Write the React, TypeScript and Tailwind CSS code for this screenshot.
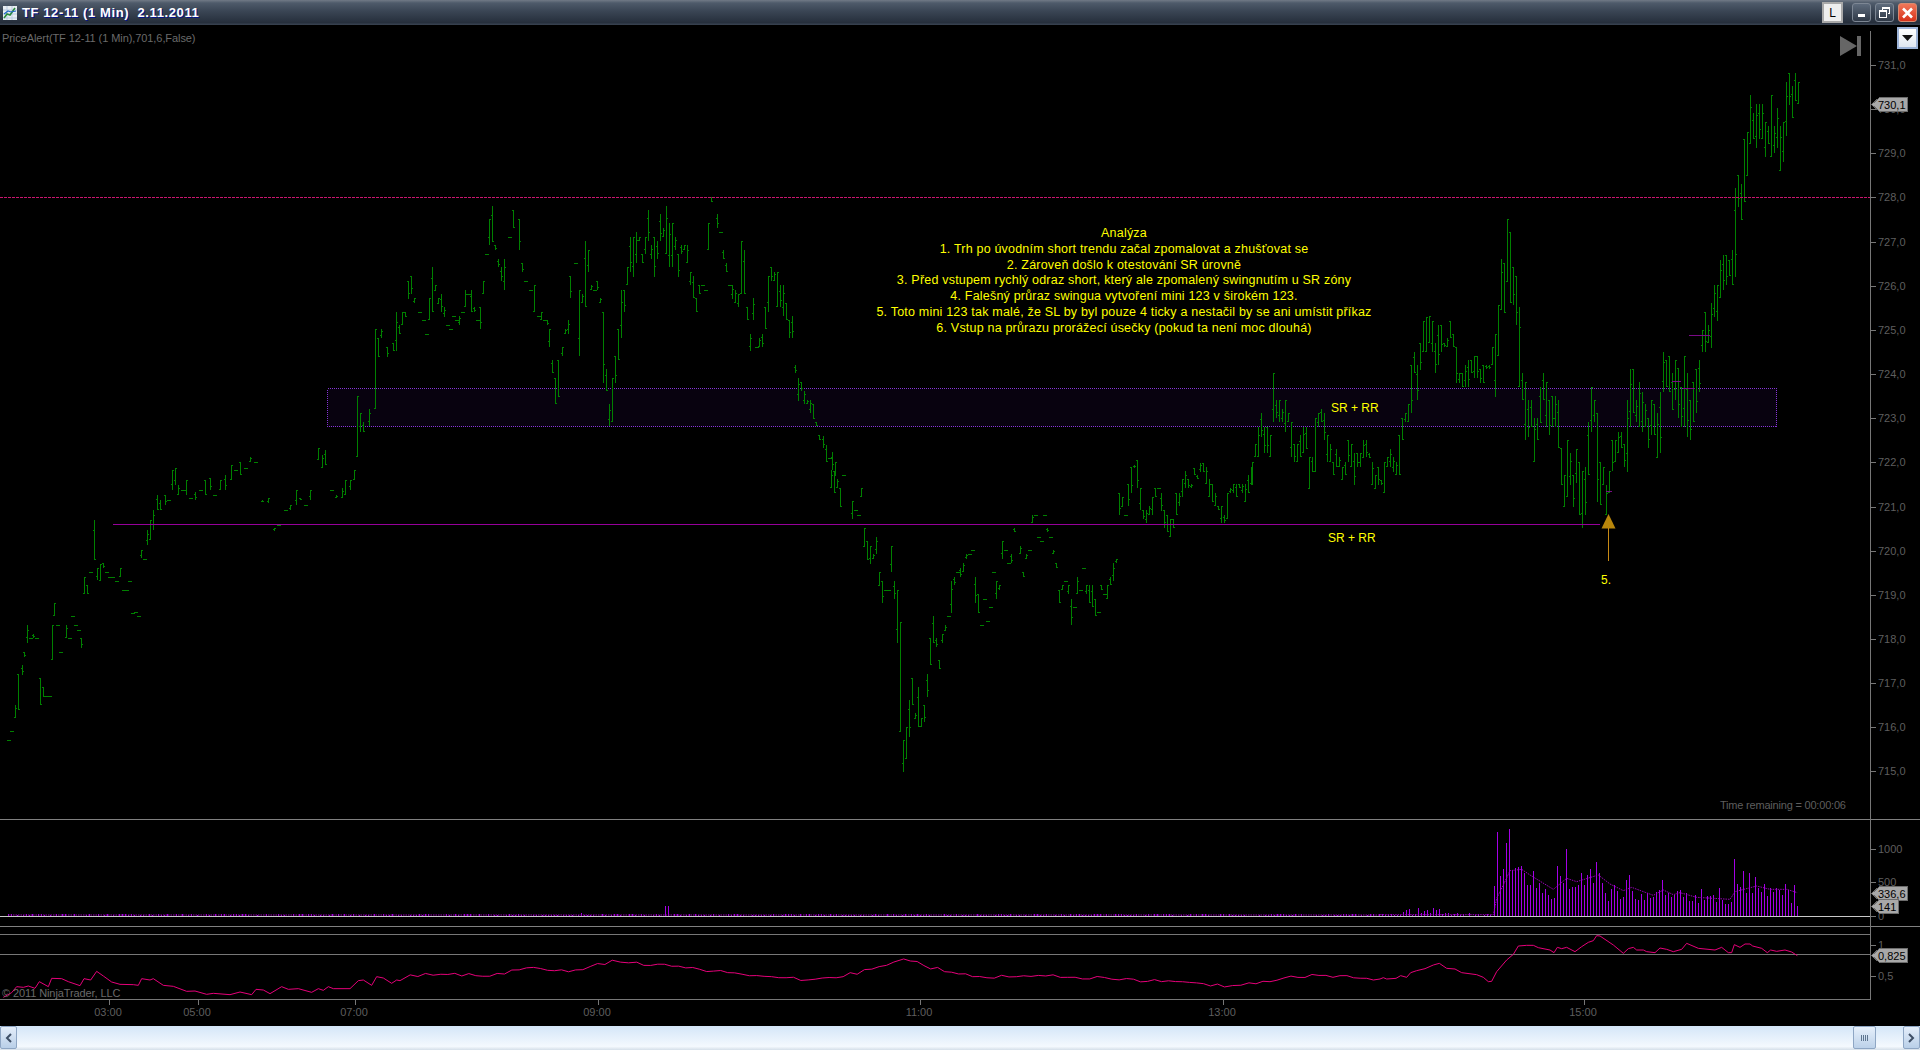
import React from "react";

function rng(seed: number) {
  let s = seed;
  return () => {
    s |= 0;
    s = (s + 0x6d2b79f5) | 0;
    let t = Math.imul(s ^ (s >>> 15), 1 | s);
    t = (t + Math.imul(t ^ (t >>> 7), 61 | t)) ^ t;
    return ((t ^ (t >>> 14)) >>> 0) / 4294967296;
  };
}

const LEFT = [8,740,740,11,731,731,15,705,718,18,674,710,22,665,675,24,652,657,27,625,643,30,638,638,33,634,638,36,638,638,40,678,705,43,687,697,46,696,696,49,696,696,52,625,660,54,603,616,57,625,625,60,652,652,66,625,638,69,638,638,72,616,616,75,625,625,78,630,630,81,638,648,84,577,594,87,585,594,90,572,572,94,520,560,97,568,580,100,564,581,103,563,568,106,572,572,109,577,577,112,577,577,116,581,581,120,568,577,123,590,590,126,590,590,129,581,581,132,613,613,135,612,612,138,616,616,141,550,558,144,559,559,147,530,545,150,520,540,153,510,530,157,495,510,160,500,510,165,495,505,168,500,500,172,470,490,175,468,485,178,485,495,182,490,490,186,480,495,190,498,498,195,492,500,200,490,490,205,480,495,210,478,490,214,495,495,220,480,490,225,475,490,231,465,480,235,470,470,240,462,475,245,468,468,250,457,462,255,462,462,262,500,502,268,498,503,274,528,531,278,525,525,285,510,510,290,505,510,296,490,505,300,498,500,305,505,505,310,490,500,318,448,460,322,455,468,325,450,465,331,490,490,336,495,498,342,488,498,345,480,495,350,480,490,354,470,480,823,436,448,826,445,462,829,458,458,832,452,470,835,462,476];
const Z9 = [172,618,800,181,670,725,190,697,725,208,658,708,226,418,658,235,445,500,244,418,445,262,472,500,280,460,484,289,366,484,298,405,433,307,366,405,316,366,380,325,273,326,334,258,312,343,325,340,357,367,367,370,391,391,379,433,433,388,324,391,397,232,367,406,285,302,415,324,341,423,312,366,433,352,380,442,406,406,451,418,418,460,379,379,469,391,391,478,379,406,487,367,367,496,300,352,505,313,313,514,300,367,523,352,367,532,391,391,541,352,418,550,273,313,559,193,193,568,88,166,577,48,155,586,166,181,595,208,232,604,232,274,613,207,301,627,142,142,640,61,115,658,88,181,667,220,247,676,274,274,690,301,301,703,286,367,713,379,379,722,367,391,731,391,391,740,391,406,748,418,472,757,511,550,766,565,643,775,511,620,785,472,499,794,418,432,803,391,432,811,259,325,825,220,220,838,301,499,847,313,340,856,154,352,865,181,247,874,286,301,883,301,301,892,274,301,901,325,340,910,367,578,919,538,604,928,643,708,937,565,697,946,499,578,955,418,511,964,301,445,973,301,367,982,232,286,991,142,247,1000,142,260,1009,127,220,1018,142,154,1027,193,220,1036,142,193,1045,60,154,1054,166,208,1063,142,260,1072,154,208,1081,72,154,1090,115,142,1099,48,193,1108,100,232,1117,100,232,1126,142,181,1135,193,260,1144,166,193,1153,166,181,1162,166,220,1171,247,286,1180,259,325,1189,325,367,1198,286,313,1207,286,286,1216,301,301,1225,100,181,1234,22,35,1252,72,115,1261,127,127,1270,181,208,1279,220,247,1288,286,286,1297,286,326,1306,301,340,1315,313,352,1324,154,313,1333,181,313,1342,352,391,1351,433,484,1360,325,391,1369,472,472,1378,445,472,1387,433,472,1396,352,418,1405,259,367,1414,232,274,1423,247,274,1432,247,352,1441,286,352,1450,286,379,1459,340,391,1468,391,445,1477,379,445,1486,526,550,1495,565,632,1504,577,604,1513,604,643,1522,631,643,1531,631,670,1540,643,686,1549,697,708,1558,735,750];
const Z10 = [94,0,55,103,3,70,112,28,55,121,55,110,130,15,15,157,93,148,166,121,121,175,136,136,184,55,82,193,175,230,202,214,270,211,228,281,220,253,268,229,202,253,238,307,347,247,334,400,256,361,361,265,361,361,274,229,307,283,334,388,292,361,520,301,455,785,310,810,905,319,771,866,328,690,800,337,625,706,346,730,746,355,652,772,364,745,772,373,706,757,382,613,680,391,505,586,400,439,520,409,505,532,418,571,598,427,493,520,436,466,482,445,439,439,454,334,428,463,322,346,472,307,307,481,295,322,490,280,307,499,253,268,508,253,253,517,241,241,526,322,400,535,373,428,544,466,466,553,388,388,562,454,454,571,412,412,580,307,307,589,334,388,598,346,361,607,214,268,616,241,241,625,280,280,634,253,280,643,175,187,661,229,253,670,307,322,679,253,268,688,241,241,697,136,160,706,136,136,715,202,202,724,214,214,733,136,136,742,175,187,751,202,202,760,241,253,769,280,295,778,361,400,787,346,361,796,334,334,805,346,373,814,388,466,823,412,412,832,322,373,841,361,361,850,295,295,859,346,373,868,346,400,877,346,412,886,388,439,895,427,427,904,346,361,913,373,373,922,346,388,931,322,346,940,280,334,949,268,280,958,70,136,967,82,110,976,136,136,985,43,109,994,-10,70,1003,-15,-5,1012,-30,55,1021,55,120,1030,120,148,1039,120,160,1048,109,136,1057,82,136,1066,55,82,1075,55,55,1084,70,123,1093,121,175,1102,136,187,1111,148,202,1120,148,175,1129,70,136,1138,70,109,1147,28,82,1156,4,55,1165,28,55,1174,43,55,1183,-5,16,1192,16,28,1201,-20,5,1210,-20,5,1219,-10,43,1228,28,82,1237,43,95,1246,70,109,1255,109,121,1264,109,160,1273,136,160,1282,70,148,1291,55,70,1300,43,70,1309,43,82,1318,43,55,1327,43,70,1336,43,95,1345,16,70,1354,-10,43];
const Z11 = [36,757,825,44,703,742,53,650,742,62,610,680,71,650,730,80,650,730,89,676,742,98,490,637,107,570,625,116,570,637,125,597,637,134,570,665,143,610,637,152,637,742,161,703,757,170,703,757,179,676,742,188,650,730,197,650,716,206,742,836,215,742,785,224,625,785,233,610,650,242,597,637,251,610,690,260,676,757,269,703,757,278,757,795,287,716,770,296,742,770,305,770,810,314,757,795,323,690,757,332,703,770,341,730,825,350,730,770,359,730,770,368,690,745,377,690,742,386,730,745,395,757,825,404,795,836,413,770,825,422,810,825,431,757,850,440,742,770,449,716,770,458,742,785,467,757,795,476,676,795,485,625,690,494,610,637,503,583,637,512,465,610,521,425,490,530,465,570,539,400,480,548,332,425,557,320,425,566,318,400,575,332,425,584,400,490,593,345,465,602,345,425,611,400,412,620,385,412,629,332,385,638,372,412,647,412,518,656,490,518,665,490,532,674,465,532,683,450,532,692,450,490,701,438,505,710,438,505,719,478,518,728,465,518,737,465,478,746,465,478,755,412,465,764,372,560,773,285,438,782,148,300,791,160,310,800,28,215,809,65,280,818,172,285,827,198,345,836,290,532,845,490,570,854,515,690,863,570,680,872,570,650,881,625,757,890,625,690,899,530,640,908,490,570,917,515,650,926,570,676,935,558,650,944,558,650,953,570,715,962,715,825,971,795,890,980,690,860,989,730,825,998,795,890,1007,716,820,1016,757,915,1025,782,955,1034,770,915,1043,637,795,1052,532,665,1061,570,637,1070,610,875,1079,757,885,1088,770,825,1097,825,915,1106,782,850,1115,690,782,1124,690,757,1133,665,730,1142,665,715,1151,703,770,1160,570,785,1169,478,650,1178,478,610,1187,570,637,1196,515,650,1205,545,665,1214,583,650,1223,625,715,1232,570,676,1241,583,676,1250,610,745,1259,545,730,1268,425,545,1277,450,532,1286,438,545,1295,490,600,1304,450,570,1313,475,625,1322,530,650,1331,438,650,1340,490,680,1349,570,690,1358,515,637,1367,478,610,1376,450,545,1385,360,425,1394,305,425,1403,345,400,1412,280,415,1421,225,320,1430,225,332,1439,150,265,1448,135,240,1457,135,225,1466,150,198,1475,120,225];
const Z8 = [764,385,651,773,345,440,782,372,480,791,238,425,800,215,347,809,105,253,818,160,238,827,133,265,836,133,238,845,133,238,854,187,292,863,198,253,872,105,292,881,198,280,890,145,265,899,198,332,908,187,305,917,66,228,926,40,135,935,79,173,944,40,122,953,66,133];

function barsPath() {
  const r = rng(12);
  let d = "";
  const add = (x0: number, t0: number, b0: number) => {
    const xi = Math.round(x0);
    const x = xi + 0.5;
    const t = Math.round(t0);
    const b = Math.round(b0);
    if (b - t < 1) {
      d += `M${xi - 1} ${t + 0.5}H${xi + 3}`;
      return;
    }
    d += `M${x} ${t}V${b}`;
    const nearTop = r() > 0.5;
    const q = Math.round((b - t) * 0.25);
    const o = nearTop ? t + 0.5 + Math.floor(r() * 2) * q : b - 0.5 - Math.floor(r() * 2) * q;
    const c = nearTop ? b - 0.5 - Math.floor(r() * 2) * q : t + 0.5 + Math.floor(r() * 2) * q;
    d += `M${xi - 1} ${o}H${xi}M${xi + 1} ${c}H${xi + 2}`;
  };
  for (let i = 0; i < LEFT.length; i += 3) add(LEFT[i], LEFT[i + 1], LEFT[i + 2]);
  for (let i = 0; i < Z9.length; i += 3) add(300 + Z9[i] / 3, 190 + Z9[i + 1] / 3, 190 + Z9[i + 2] / 3);
  for (let i = 0; i < Z10.length; i += 3) add(800 + Z10[i] / 3, 470 + Z10[i + 1] / 3, 470 + Z10[i + 2] / 3);
  for (let i = 0; i < Z11.length; i += 3) add(1240 + Z11[i] / 3, 210 + Z11[i + 1] / 3, 210 + Z11[i + 2] / 3);
  for (let i = 0; i < Z8.length; i += 3) add(1480 + Z8[i] / 3, 60 + Z8[i + 1] / 3, 60 + Z8[i + 2] / 3);
  return d;
}

const VOL = [228,65,198,178,98,57,180,175,172,168,190,225,225,183,235,218,250,237,255,268,265,168,198,218,117,237,232,232,225,190,225,195,178,218,156,188,220,250,272,237,225,243,268,262,210,195,243,267,270,252,270,248,265,262,245,240,210,255,248,262,255,243,240,260,250,272,272,255,280,237,270,257,257,255,275,235,270,282,282,275,148,222,232,183,248,190,250,202,235,245,222,258,235,245,235,240,255,222,240,278,225,288];

function volPath() {
  const r = rng(5);
  let d = "";
  for (let x = 8; x < 1494; x += 3) {
    let h = 1 + Math.floor(r() * 3);
    if (x > 575 && x < 590) h = 2 + Math.floor(r() * 4);
    if (x === 665 || x === 668) h = 11;
    if (x > 1400 && x < 1440) h = 2 + Math.floor(r() * 9);
    if (x >= 1440) h = 1 + Math.floor(r() * 4);
    d += `M${x + 0.5} 917V${917 - h}`;
  }
  VOL.forEach((v, i) => {
    const x = Math.round(1380 + (343 + i * 9) / 3) + 0.5;
    d += `M${x} 917V${Math.round(810 + v / 3)}`;
  });
  return d;
}

const SMA = [[0,314],[340,314],[350,265],[370,225],[390,182],[425,178],[450,195],[520,238],[560,205],[590,215],[655,195],[690,222],[730,242],[755,232],[820,256],[850,240],[880,254],[900,248],[950,262],[1050,268],[1065,245],[1130,228],[1170,238],[1220,238],[1252,248]];
const smaPts = "8,915 1380,915 " + SMA.map(([v, y]) => `${1380 + v / 3},${810 + y / 3}`).join(" ");

const OSC4 = [[10,292],[35,278],[50,260],[70,262],[85,258],[105,265],[118,245],[145,260],[155,235],[185,236],[205,245],[240,257],[252,236],[272,240],[290,214],[310,228],[335,246],[360,253],[400,254],[415,256],[425,236],[450,240],[460,236],[490,256],[520,259],[560,274],[585,273],[620,283],[640,280],[690,284],[720,276],[755,284],[768,268],[790,270],[810,281],[845,260],[865,268],[895,266],[935,277],[955,266],[970,271],[985,260],[1000,266],[1050,266],[1075,242],[1090,240],[1115,256],[1130,230],[1150,234],[1175,250],[1190,240],[1200,242]];
const OSCS = [[335,797],[360,795],[400,797],[430,790],[470,793],[500,785],[520,787],[560,790],[600,795],[660,800],[700,795],[730,785],[738,782],[760,790],[800,798],[860,797],[920,800],[1000,805],[1020,803],[1060,797],[1100,797],[1127,800]];
const OSC12 = [[0,507],[10,503],[20,507],[48,505],[62,497],[80,502],[92,488],[110,482],[135,476],[160,465],[178,460],[200,475],[225,477],[245,488],[290,494],[310,502],[325,515],[335,514],[350,485],[380,450],[400,433],[415,408],[440,406],[460,406],[475,413],[510,420],[522,428],[532,412],[545,416],[560,412],[585,425],[605,410],[625,397],[640,392],[650,377],[660,378],[700,405],[730,430],[745,416],[760,412],[770,420],[790,420],[800,425],[825,428],[840,414],[860,418],[880,425],[905,418],[920,400],[955,415],[1005,420],[1025,412],[1045,428],[1055,428],[1063,404],[1080,412],[1095,402],[1110,402],[1118,408],[1145,415],[1162,428],[1172,420],[1190,424],[1215,420],[1235,426],[1252,437]];

function oscPoints() {
  const r = rng(9);
  const pts: string[] = [];
  OSC4.forEach(([v, y]) => pts.push(`${v / 3},${900 + y / 3}`));
  const s = 1920 / 1568;
  for (let i = 0; i < OSCS.length - 1; i++) {
    const [x0, y0] = OSCS[i];
    const [x1, y1] = OSCS[i + 1];
    const n = Math.max(1, Math.round(((x1 - x0) * s) / 7));
    for (let k = 0; k < n; k++) {
      const f = k / n;
      pts.push(`${(x0 + (x1 - x0) * f) * s},${(y0 + (y1 - y0) * f) * s + (r() - 0.5) * 3.5}`);
    }
  }
  OSC12.forEach(([v, y]) => pts.push(`${1380 + v / 3},${810 + y / 3}`));
  return pts.join(" ");
}

const yPrice = (p: number) => Math.round(65 + (731 - p) * 44.15);

const H = ({ x1 = 0, x2 = 1870, y, c = "#777777" }: { x1?: number; x2?: number; y: number; c?: string }) => (
  <rect x={x1} y={y} width={x2 - x1} height={1} fill={c} />
);

const Axis = ({ y1, y2 }: { y1: number; y2: number }) => <rect x={1870} y={y1} width={1} height={y2 - y1} fill="#777777" />;

const Tick = ({ y, label }: { y: number; label: string }) => (
  <>
    <rect x={1871} y={y} width={5} height={1} fill="#777777" />
    <text x={1878} y={y + 4} className="fill-[#5e5e5e] text-[11px]">{label}</text>
  </>
);

const Pennant = ({ y, w, label }: { y: number; w: number; label: string }) => (
  <>
    <polygon
      points={`1871.5,${y + 0.5} 1879.5,${y - 6.5} ${1871.5 + w},${y - 6.5} ${1871.5 + w},${y + 7.5} 1879.5,${y + 7.5}`}
      fill="#a8a8a8"
      stroke="#6c6c6c"
    />
    <text x={1878} y={y + 4.5} className="fill-black text-[11px]">{label}</text>
  </>
);

const Panel = ({ top, h, children }: { top: number; h: number; children: React.ReactNode }) => (
  <svg viewBox={`0 ${top} 1920 ${h}`} width={1920} height={h} className="block" shapeRendering="crispEdges">
    {children}
  </svg>
);

const ANALYSIS = [
  "Analýza",
  "1. Trh po úvodním short trendu začal zpomalovat a zhušťovat se",
  "2. Zároveň došlo k otestování SR úrovně",
  "3. Před vstupem rychlý odraz short, který ale zpomalený swingnutím u SR zóny",
  "4. Falešný průraz swingua vytvoření mini 123 v širokém 123.",
  "5. Toto mini 123 tak malé, že SL by byl pouze 4 ticky a nestačil by se ani umístit příkaz",
  "6. Vstup na průrazu prorážecí úsečky (pokud ta není moc dlouhá)",
];

const TIMES: [number, string][] = [[109, "03:00"], [198, "05:00"], [355, "07:00"], [598, "09:00"], [920, "11:00"], [1223, "13:00"], [1584, "15:00"]];

const bars = barsPath();
const vol = volPath();
const osc = oscPoints();

function TitleBar() {
  return (
    <div className="flex h-[25px] items-center bg-[linear-gradient(#717a86_0%,#4e5a6a_12%,#3a4554_45%,#262f3c_90%,#3a4452_100%)] pl-[3px] pr-[3px]">
      <svg width="14" height="14" viewBox="0 0 14 14" className="mt-px">
        <rect width="14" height="14" fill="#e9eef2" />
        <path d="M0 4H14M0 8H14M0 12H14M4 0V14M9 0V14" stroke="#b9cbe0" strokeWidth="1" />
        <path d="M1 12L4 8L7 9L12 2" stroke="#2a8a3c" strokeWidth="1.6" fill="none" />
        <path d="M1 8L5 5L8 6L13 5" stroke="#2266c8" strokeWidth="1.2" fill="none" />
      </svg>
      <span className="ml-[5px] whitespace-pre text-[13px] font-bold tracking-[0.6px] text-white [text-shadow:1px_1px_0_#06148a]">
        TF 12-11 (1 Min)  2.11.2011
      </span>
      <div className="ml-auto flex items-center">
        <div className="flex h-[21px] w-[21px] items-center justify-center border-2 border-[#a9a9a9] bg-[#eeeeee] text-[12px] leading-none text-black">L</div>
        <div className="ml-[9px] flex h-[19px] w-[19px] items-end justify-center rounded-[3px] border border-[#7d8794] bg-[linear-gradient(#5e6b7c,#2f3947)] pb-[4px]">
          <div className="h-[3px] w-[7px] bg-white" />
        </div>
        <div className="ml-[4px] flex h-[19px] w-[19px] items-center justify-center rounded-[3px] border border-[#7d8794] bg-[linear-gradient(#5e6b7c,#2f3947)]">
          <svg width="11" height="11" viewBox="0 0 11 11" shapeRendering="crispEdges">
            <path d="M3.5 2.5V0.5H10.5V6.5H8.5M3.5 1.5H10.5" stroke="white" fill="none" />
            <path d="M0.5 3.5H7.5V10.5H0.5ZM0.5 4.5H7.5" stroke="white" fill="none" />
          </svg>
        </div>
        <div className="ml-[4px] flex h-[19px] w-[19px] items-center justify-center rounded-[3px] border border-[#d88a70] bg-[linear-gradient(#f0785a,#d8321a)]">
          <svg width="13" height="12" viewBox="0 0 13 12">
            <path d="M2 1.5L11 10.5M11 1.5L2 10.5" stroke="white" strokeWidth="2.6" />
          </svg>
        </div>
      </div>
    </div>
  );
}

function MainPanel() {
  return (
    <div className="relative h-[794px]">
      <Panel top={25} h={794}>
        <rect x={327.5} y={388.5} width={1449} height={38} fill="#08020f" stroke="#8535d4" strokeDasharray="1 1" />
        <path d={bars} stroke="#008000" fill="none" />
        <line x1={0} x2={1870} y1={197.5} y2={197.5} stroke="#c8166e" strokeDasharray="3 1" />
        <H x1={113} x2={1600} y={524} c="#96009a" />
        <path d="M1689 335.5H1710M1672 381.5H1681M1683 388.5H1695M1606 491.5H1612" stroke="#7a0a86" />
        <g shapeRendering="auto">
          <polygon points="1608.5,514 1615.5,528.5 1601.5,528.5" fill="#b8860b" />
        </g>
        <rect x={1608} y={528} width={1} height={33} fill="#c88a14" />
        <Axis y1={31} y2={819} />
        {Array.from({ length: 17 }, (_, i) => 731 - i).map((p) => (
          <Tick key={p} y={yPrice(p)} label={`${p},0`} />
        ))}
        <Pennant y={104} w={36} label="730,1" />
        <g shapeRendering="auto">
          <polygon points="1840,36 1857,46 1840,56" fill="#666666" />
        </g>
        <rect x={1857} y={36} width={4} height={20} fill="#666666" />
      </Panel>
      <span className="absolute left-[2px] top-[6px] whitespace-nowrap text-[11px] leading-[14px] tracking-[-0.08px] text-[#6a6a6a]">
        PriceAlert(TF 12-11 (1 Min),701,6,False)
      </span>
      <div className="absolute left-[824px] top-[201px] w-[600px] whitespace-nowrap text-center text-[12.5px] leading-[15.8px] tracking-[0.2px] text-[#ffff00]">
        {ANALYSIS.map((t) => (
          <div key={t}>{t}</div>
        ))}
      </div>
      <span className="absolute left-[1331px] top-[376px] text-[12px] leading-[14px] text-[#ffff00]">SR + RR</span>
      <span className="absolute left-[1328px] top-[506px] text-[12px] leading-[14px] text-[#ffff00]">SR + RR</span>
      <span className="absolute left-[1601px] top-[548px] text-[12px] leading-[14px] text-[#ffff00]">5.</span>
      <span className="absolute left-[1720px] top-[773px] whitespace-nowrap text-[11px] leading-[14px] tracking-[-0.2px] text-[#5e5e5e]">Time remaining = 00:00:06</span>
      <div className="absolute left-[1897px] top-[2px] flex h-[22px] w-[21px] items-center justify-center border-2 border-[#9db4d8] bg-[linear-gradient(#ffffff,#dfe6f0)]">
        <svg width="11" height="6" viewBox="0 0 11 6"><polygon points="0,0 11,0 5.5,6" fill="#111" /></svg>
      </div>
    </div>
  );
}

function VolumePanel() {
  return (
    <Panel top={819} h={107}>
      <H x2={1920} y={819} c="#808080" />
      <path d={vol} stroke="#a400e6" fill="none" />
      <H y={916} c="#c8c8c8" />
      <g shapeRendering="auto">
        <polyline points={smaPts} fill="none" stroke="#9a00b8" strokeWidth={1} strokeDasharray="1.5 1" />
      </g>
      <Axis y1={819} y2={926} />
      <Tick y={849} label="1000" />
      <Tick y={882} label="500" />
      <Tick y={916} label="0" />
      <Pennant y={893} w={36} label="336,6" />
      <Pennant y={906} w={27} label="141" />
    </Panel>
  );
}

function OscPanel() {
  return (
    <div className="relative h-[74px]">
      <Panel top={926} h={74}>
        <H x2={1920} y={926} c="#808080" />
        <H y={934} />
        <H y={954} />
        <H y={999} />
        <g shapeRendering="auto">
          <polyline points={osc} fill="none" stroke="#e6007a" strokeWidth={1} />
        </g>
        <Axis y1={926} y2={1000} />
        <Tick y={945} label="1" />
        <Tick y={976} label="0,5" />
        <Pennant y={955} w={36} label="0,825" />
      </Panel>
      <span className="absolute left-[2px] top-[60px] whitespace-nowrap text-[11px] leading-[14px] tracking-[-0.1px] text-[#6a6a6a]">© 2011 NinjaTrader, LLC</span>
    </div>
  );
}

function TimeAxis() {
  return (
    <Panel top={1000} h={26}>
      {TIMES.map(([x, t]) => (
        <g key={t}>
          <rect x={x} y={1000} width={1} height={5} fill="#777777" />
          <text x={x - 1} y={1016} textAnchor="middle" className="fill-[#5e5e5e] text-[11px]">{t}</text>
        </g>
      ))}
    </Panel>
  );
}

const ScrollBtn = ({ dir }: { dir: "l" | "r" }) => (
  <div className="flex h-[23px] w-[17px] items-center justify-center rounded-[2px] border border-[#8ea6c4] bg-[linear-gradient(#e4eefa,#b9cfe8)]">
    <svg width="7" height="10" viewBox="0 0 7 10">
      <path d={dir === "l" ? "M6 1L2 5L6 9" : "M1 1L5 5L1 9"} stroke="#3e4f66" strokeWidth="2" fill="none" />
    </svg>
  </div>
);

function ScrollBar() {
  return (
    <div className="flex h-[24px] items-start bg-[linear-gradient(#d4e6f8,#f4f9fe_85%,#d5dfe9)]">
      <ScrollBtn dir="l" />
      <div className="flex-1" />
      <div className="flex h-[23px] w-[23px] items-center justify-center rounded-[2px] border border-[#8ea6c4] bg-[linear-gradient(#e6f0fb,#bcd1e9)]">
        <svg width="8" height="6" viewBox="0 0 8 6" shapeRendering="crispEdges">
          <path d="M0.5 0V6M2.5 0V6M4.5 0V6M6.5 0V6" stroke="#5f7690" />
        </svg>
      </div>
      <div className="w-[27px]" />
      <ScrollBtn dir="r" />
    </div>
  );
}

export default function App() {
  return (
    <div className="flex h-[1050px] w-[1920px] flex-col overflow-hidden bg-black font-['Liberation_Sans',Arial,sans-serif]">
      <TitleBar />
      <MainPanel />
      <VolumePanel />
      <OscPanel />
      <TimeAxis />
      <ScrollBar />
    </div>
  );
}
